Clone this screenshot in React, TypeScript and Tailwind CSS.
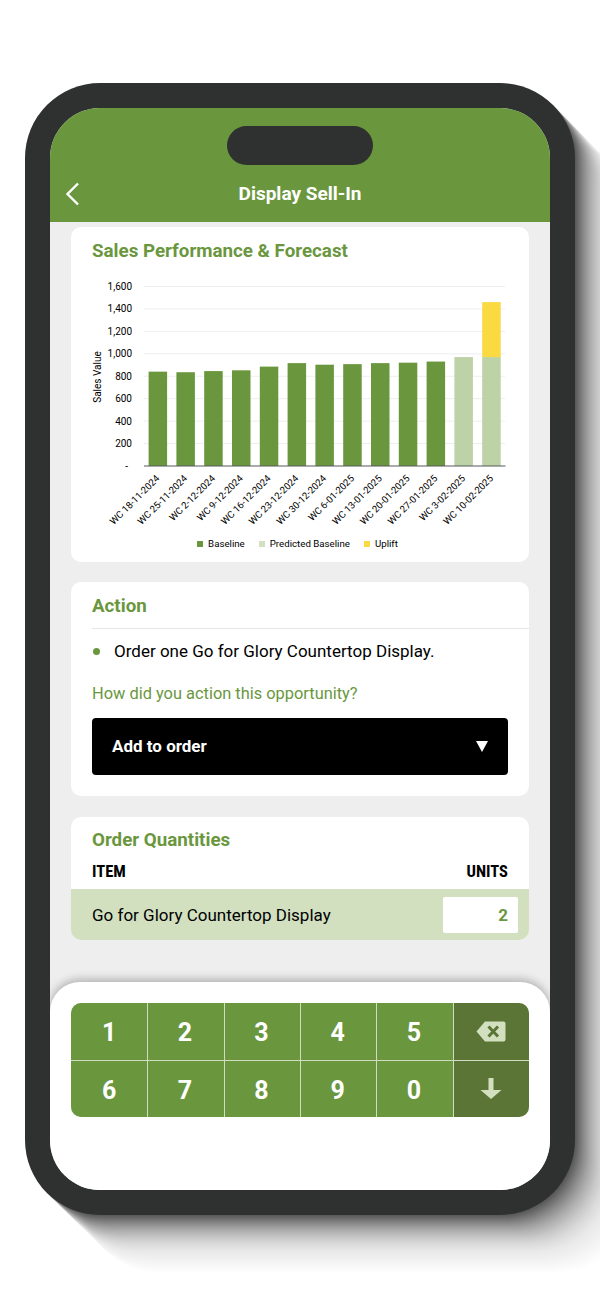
/**
 * Display Sell-In: phone mockup with chart, action and order quantity cards
 */
const FONT = "Roboto, sans-serif";

const WEEKS = [
  { label: "WC 18-11-2024", base: 841 },
  { label: "WC 25-11-2024", base: 836 },
  { label: "WC 2-12-2024", base: 846 },
  { label: "WC 9-12-2024", base: 853 },
  { label: "WC 16-12-2024", base: 886 },
  { label: "WC 23-12-2024", base: 917 },
  { label: "WC 30-12-2024", base: 903 },
  { label: "WC 6-01-2025", base: 908 },
  { label: "WC 13-01-2025", base: 917 },
  { label: "WC 20-01-2025", base: 921 },
  { label: "WC 27-01-2025", base: 931 },
  { label: "WC 3-02-2025", base: 971, predicted: true },
  { label: "WC 10-02-2025", base: 971, predicted: true, uplift: 490 },
];

const TICKS = [1600, 1400, 1200, 1000, 800, 600, 400, 200];

// chart coordinates are relative to the svg box, which starts at the card's left edge
const AXIS_Y = 196;
const GRID_TOP = 16.5;
const SCALE = (AXIS_Y - GRID_TOP) / 1600;

function LongShadow() {
  const layers = Array.from({ length: 130 }, (_, i) => i + 1);
  return (
    <svg className="absolute left-0 top-0" width="600" height="1298" aria-hidden="true">
      {layers.reverse().map((i) => (
        <rect
          key={i}
          x={25 + i}
          y={83 + i}
          width="550"
          height="1132"
          rx="75"
          fill="#000"
          fillOpacity={(0.85 / 14) * Math.exp(-i / 14) + (0.17 / 60) * Math.exp(-i / 60)}
        />
      ))}
    </svg>
  );
}

function SalesChart() {
  return (
    <svg width="458" height="275" className="block" style={{ fontFamily: FONT }}>
      {TICKS.map((t) => (
        <g key={t}>
          <line x1="73" x2="434" y1={AXIS_Y - t * SCALE} y2={AXIS_Y - t * SCALE} stroke="#eeeeee" />
          <text x="61" y={AXIS_Y - t * SCALE + 3.5} textAnchor="end" fontSize="10" fill="#000">
            {t.toLocaleString("en-US")}
          </text>
        </g>
      ))}
      <text x="57" y={AXIS_Y + 3.5} textAnchor="end" fontSize="10" fill="#000">
        -
      </text>
      <text
        x="0"
        y="0"
        transform="translate(30 107) rotate(-90)"
        textAnchor="middle"
        fontSize="10"
        fill="#000"
      >
        Sales Value
      </text>
      {WEEKS.map((w, i) => {
        const x = 77.6 + i * 27.8;
        const h = w.base * SCALE;
        const up = (w.uplift ?? 0) * SCALE;
        return (
          <g key={w.label}>
            <rect
              x={x}
              y={AXIS_Y - h}
              width="18.5"
              height={h}
              fill={w.predicted ? "#bdd2a6" : "#6a973e"}
            />
            {up > 0 && <rect x={x} y={AXIS_Y - h - up} width="18.5" height={up} fill="#fbd941" />}
            <text
              transform={`translate(${x + 11.5} 209) rotate(-45)`}
              textAnchor="end"
              fontSize="9.6"
              fill="#000"
            >
              {w.label}
            </text>
          </g>
        );
      })}
      <line x1="73" x2="434.5" y1={AXIS_Y} y2={AXIS_Y} stroke="#55585a" strokeWidth="1.2" />
    </svg>
  );
}

function Legend({ color, label }: { color: string; label: string }) {
  return (
    <div className="flex items-center gap-[5px]">
      <span className={`w-[6px] h-[6px] ${color}`} />
      <span className="text-[9.7px] leading-none text-black">{label}</span>
    </div>
  );
}

function Backspace() {
  return (
    <svg width="30" height="21" viewBox="0 0 30 21">
      <path
        d="M9 0.5H27.5a2 2 0 0 1 2 2V18.5a2 2 0 0 1-2 2H9L0.5 10.5Z"
        fill="#d2e0c0"
      />
      <path d="M12.5 5.5L22 15.5M22 5.5L12.5 15.5" stroke="#5a7536" strokeWidth="3" />
    </svg>
  );
}

function ArrowDown() {
  return (
    <svg width="22" height="21" viewBox="0 0 22 21">
      <path d="M8.5 0H13.5V12H21.5L11 21L0.5 12H8.5Z" fill="#d2e0c0" />
    </svg>
  );
}

function Key({ value, first }: { value: string; first?: boolean }) {
  return (
    <div
      className={
        first
          ? "flex items-center justify-center pt-[3px] text-[25px] font-bold text-white bg-[#6a973e]"
          : "flex items-center justify-center pt-[3px] pr-[2px] border-l border-[#cfdcbf] text-[25px] font-bold text-white bg-[#6a973e]"
      }
    >
      {value}
    </div>
  );
}

export default function App() {
  return (
    <div
      className="relative w-[600px] h-[1298px] overflow-hidden bg-white pl-[25px] pt-[83px]"
      style={{ fontFamily: FONT }}
    >
      <LongShadow />
      <div className="relative w-[550px] h-[1132px] rounded-[75px] bg-[#2f3130] p-[25px]">
        <div className="flex flex-col h-full rounded-[50px] overflow-hidden bg-[#eeeeee]">
          {/* header */}
          <div className="relative flex flex-col items-center h-[114px] shrink-0 bg-[#6a973e] pt-[18px]">
            <div className="w-[146px] h-[39px] rounded-full bg-[#2f3130]" />
            <div className="mt-[15px] text-[19px] leading-[28px] font-bold text-white">
              Display Sell-In
            </div>
            <svg
              className="absolute left-[15px] top-[74px]"
              width="15"
              height="24"
              viewBox="0 0 15 24"
              fill="none"
            >
              <path d="M13 1.5L2.5 12L13 22.5" stroke="#fff" strokeWidth="2.4" />
            </svg>
          </div>

          <div className="flex-1 flex flex-col px-[21px] pt-[5px]">
            {/* chart card */}
            <div className="h-[335px] rounded-[10px] bg-white">
              <div className="pl-[21px] pt-[11px] text-[18.75px] leading-[26px] font-bold text-[#6a973e]">
                Sales Performance &amp; Forecast
              </div>
              <div className="mt-[6px]">
                <SalesChart />
              </div>
              <div className="flex justify-center gap-[14px] mt-[-6px] pr-[5px]">
                <Legend color="bg-[#6a973e]" label="Baseline" />
                <Legend color="bg-[#d2e0c0]" label="Predicted Baseline" />
                <Legend color="bg-[#fbd941]" label="Uplift" />
              </div>
            </div>

            {/* action card */}
            <div className="h-[214px] mt-[20px] rounded-[10px] bg-white pl-[21px] pt-[12px]">
              <div className="h-[35px] border-b border-[#e6e6e6] text-[18.75px] leading-[24px] font-bold text-[#6a973e]">
                Action
              </div>
              <div className="flex items-center mt-[11px] text-[17px] leading-[22px] text-black">
                <span className="w-[7px] h-[7px] rounded-full bg-[#6a973e] ml-[1px] mr-[14px]" />
                Order one Go for Glory Countertop Display.
              </div>
              <div className="mt-[21px] text-[16.4px] leading-[22px] text-[#6a973e]">
                How did you action this opportunity?
              </div>
              <div className="flex items-center justify-between w-[416px] h-[57px] mt-[13px] rounded-[4px] bg-black pl-[20px] pr-[20px]">
                <span className="text-[17px] font-bold text-white">Add to order</span>
                <span className="w-0 h-0 border-x-[6px] border-x-transparent border-t-[11px] border-t-white" />
              </div>
            </div>

            {/* order quantities card */}
            <div className="h-[123px] mt-[21px] flex flex-col rounded-[10px] bg-white overflow-hidden">
              <div className="pl-[21px] pr-[21px] pt-[10px]">
                <div className="text-[18.75px] leading-[26px] font-bold text-[#6a973e]">
                  Order Quantities
                </div>
                <div className="flex justify-between mt-[9px] text-[16.5px] leading-[20px] font-bold text-black [font-stretch:85%]">
                  <span>ITEM</span>
                  <span>UNITS</span>
                </div>
              </div>
              <div className="flex items-center justify-between h-[51px] mt-auto bg-[#d2e0c0] pl-[21px] pr-[11px] pt-[1px]">
                <span className="pt-[1px] text-[17px] text-black">
                  Go for Glory Countertop Display
                </span>
                <div className="flex items-center justify-end w-[75px] h-[36px] rounded-[2px] bg-white pr-[10px] pt-[1px] text-[17px] font-bold text-[#6a973e]">
                  2
                </div>
              </div>
            </div>
          </div>

          {/* keypad */}
          <div className="relative h-[208px] shrink-0 rounded-t-[30px] bg-white px-[21px] pt-[21px] shadow-[0_-3px_8px_rgba(0,0,0,0.25)]">
            <div className="grid grid-cols-6 grid-rows-2 gap-y-px h-[114px] rounded-[10px] overflow-hidden bg-[#cfdcbf]">
              {["1", "2", "3", "4", "5"].map((k, i) => (
                <Key key={k} value={k} first={i === 0} />
              ))}
              <div className="flex items-center justify-center border-l border-[#cfdcbf] bg-[#5a7536]">
                <Backspace />
              </div>
              {["6", "7", "8", "9", "0"].map((k, i) => (
                <Key key={k} value={k} first={i === 0} />
              ))}
              <div className="flex items-center justify-center border-l border-[#cfdcbf] bg-[#5a7536]">
                <ArrowDown />
              </div>
            </div>
          </div>
        </div>
      </div>
    </div>
  );
}
